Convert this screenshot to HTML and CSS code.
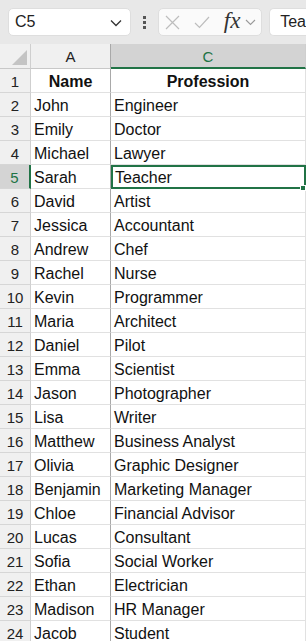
FILE: index.html
```html
<!DOCTYPE html>
<html>
<head>
<meta charset="utf-8">
<link rel="stylesheet" href="styles.css">
</head>
<body>
<div class="topbar">
  <div class="namebox">
    <span class="ref">C5</span>
    <svg class="chev" width="12" height="8" viewBox="0 0 12 8"><path d="M1 1.5 L6 6.5 L11 1.5" fill="none" stroke="#333" stroke-width="1.3"/></svg>
  </div>
  <div class="dots"><i></i><i></i><i></i></div>
  <div class="fbuttons">
    <svg class="ic" width="15" height="15" viewBox="0 0 15 15"><path d="M1 1 L14 14 M14 1 L1 14" stroke="#bdbdbd" stroke-width="1.2" fill="none"/></svg>
    <svg class="ic chk" width="16" height="13" viewBox="0 0 16 13"><path d="M1 7 L5.5 11.5 L15 1" stroke="#bdbdbd" stroke-width="1.2" fill="none"/></svg>
    <span class="fx">fx</span>
    <svg class="ic small" width="11" height="7" viewBox="0 0 11 7"><path d="M1 1 L5.5 5.5 L10 1" stroke="#9a9a9a" stroke-width="1.1" fill="none"/></svg>
  </div>
  <div class="finput">Tea</div>
</div>
<div class="sheet">
  <div class="row head">
    <div class="rh corner"><span class="tri"></span></div>
    <div class="ch">A</div>
    <div class="ch sel">C</div>
  </div>
  <div class="row"><div class="rh">1</div><div class="c b">Name</div><div class="c b">Profession</div></div>
  <div class="row"><div class="rh">2</div><div class="c">John</div><div class="c">Engineer</div></div>
  <div class="row"><div class="rh">3</div><div class="c">Emily</div><div class="c">Doctor</div></div>
  <div class="row"><div class="rh">4</div><div class="c">Michael</div><div class="c">Lawyer</div></div>
  <div class="row"><div class="rh sel">5</div><div class="c">Sarah</div><div class="c active">Teacher<span class="handle"></span></div></div>
  <div class="row"><div class="rh">6</div><div class="c">David</div><div class="c">Artist</div></div>
  <div class="row"><div class="rh">7</div><div class="c">Jessica</div><div class="c">Accountant</div></div>
  <div class="row"><div class="rh">8</div><div class="c">Andrew</div><div class="c">Chef</div></div>
  <div class="row"><div class="rh">9</div><div class="c">Rachel</div><div class="c">Nurse</div></div>
  <div class="row"><div class="rh">10</div><div class="c">Kevin</div><div class="c">Programmer</div></div>
  <div class="row"><div class="rh">11</div><div class="c">Maria</div><div class="c">Architect</div></div>
  <div class="row"><div class="rh">12</div><div class="c">Daniel</div><div class="c">Pilot</div></div>
  <div class="row"><div class="rh">13</div><div class="c">Emma</div><div class="c">Scientist</div></div>
  <div class="row"><div class="rh">14</div><div class="c">Jason</div><div class="c">Photographer</div></div>
  <div class="row"><div class="rh">15</div><div class="c">Lisa</div><div class="c">Writer</div></div>
  <div class="row"><div class="rh">16</div><div class="c">Matthew</div><div class="c">Business Analyst</div></div>
  <div class="row"><div class="rh">17</div><div class="c">Olivia</div><div class="c">Graphic Designer</div></div>
  <div class="row"><div class="rh">18</div><div class="c">Benjamin</div><div class="c">Marketing Manager</div></div>
  <div class="row"><div class="rh">19</div><div class="c">Chloe</div><div class="c">Financial Advisor</div></div>
  <div class="row"><div class="rh">20</div><div class="c">Lucas</div><div class="c">Consultant</div></div>
  <div class="row"><div class="rh">21</div><div class="c">Sofia</div><div class="c">Social Worker</div></div>
  <div class="row"><div class="rh">22</div><div class="c">Ethan</div><div class="c">Electrician</div></div>
  <div class="row"><div class="rh">23</div><div class="c">Madison</div><div class="c">HR Manager</div></div>
  <div class="row"><div class="rh">24</div><div class="c">Jacob</div><div class="c">Student</div></div>
</div>
</body>
</html>
```
FILE: styles.css
```css
* { box-sizing: border-box; }
html, body { margin: 0; padding: 0; }
body {
  width: 306px;
  height: 641px;
  overflow: hidden;
  background: #fff;
  font-family: "Liberation Sans", Arial, sans-serif;
}
.topbar {
  height: 44px;
  background: #e8e8e8;
  display: flex;
  align-items: center;
  padding-left: 8px;
}
.namebox {
  width: 125px;
  height: 28px;
  background: #fff;
  border: 1px solid #dedede;
  border-radius: 5px;
  display: flex;
  align-items: center;
  justify-content: space-between;
  padding: 0 8px 0 6px;
  font-size: 16px;
  color: #222;
}
.namebox .chev { margin-top: 1px; }
.dots {
  width: 27px;
  display: flex;
  flex-direction: column;
  align-items: center;
  gap: 2px;
}
.dots i {
  display: block;
  width: 3px;
  height: 3px;
  background: #555;
}
.fbuttons {
  width: 106px;
  height: 28px;
  background: #fafafa;
  border: 1px solid #dedede;
  border-radius: 5px;
  display: flex;
  align-items: center;
  padding-left: 6px;
}
.fbuttons .chk { margin-left: 14px; }
.fbuttons .fx {
  margin-left: 14px;
  font-family: "Liberation Serif", "Times New Roman", serif;
  font-style: italic;
  font-size: 23px;
  color: #333;
  line-height: 1;
  margin-top: -3px;
}
.fbuttons .small { margin-left: 5px; }
.finput {
  margin-left: 7px;
  flex: 1;
  height: 28px;
  background: #fff;
  border: 1px solid #dedede;
  border-right: none;
  border-radius: 5px 0 0 5px;
  display: flex;
  align-items: center;
  padding-left: 10px;
  font-size: 16px;
  color: #222;
}
.sheet { width: 306px; }
.row {
  display: grid;
  grid-template-columns: 31px 80px 195px;
  height: 24px;
}
.row.head { height: 25px; }
.rh {
  background: #f0f0f0;
  border-right: 1px solid #cfcfcf;
  border-bottom: 1px solid #d6d6d6;
  font-size: 15px;
  color: #222;
  display: flex;
  align-items: center;
  justify-content: center;
  padding-top: 2px;
}
.rh.sel {
  background: #d4d4d4;
  color: #217346;
  border-right: 2px solid #217346;
}
.corner {
  position: relative;
  border-bottom: 1px solid #c8c8c8;
}
.tri {
  position: absolute;
  right: 3px;
  bottom: 3px;
  width: 0;
  height: 0;
  border-left: 15px solid transparent;
  border-bottom: 15px solid #c4c4c4;
}
.ch {
  background: #f0f0f0;
  border-right: 1px solid #a9a9a9;
  border-bottom: 1px solid #c8c8c8;
  font-size: 15px;
  color: #222;
  display: flex;
  align-items: center;
  justify-content: center;
  padding-top: 1px;
}
.ch.sel {
  background: #d3d3d3;
  color: #217346;
  border-right: 1px solid #cfcfcf;
  border-bottom: 2px solid #217346;
}
.c {
  border-right: 1px solid #e1e1e1;
  border-bottom: 1px solid #e1e1e1;
  font-size: 16px;
  color: #111;
  padding-left: 3px;
  display: flex;
  align-items: center;
  padding-top: 2px;
  white-space: nowrap;
  overflow: hidden;
}
.row .c:nth-child(2) { border-right: 1px solid #a9a9a9; }
.c.b {
  font-weight: bold;
  justify-content: center;
  padding-left: 0;
}
.c.active {
  position: relative;
  overflow: visible;
  outline: 2px solid #217346;
  outline-offset: -2px;
  padding-left: 4px;
}
.handle {
  position: absolute;
  right: -1px;
  bottom: -3px;
  width: 6px;
  height: 6px;
  background: #217346;
  border: 1px solid #fff;
}
```
